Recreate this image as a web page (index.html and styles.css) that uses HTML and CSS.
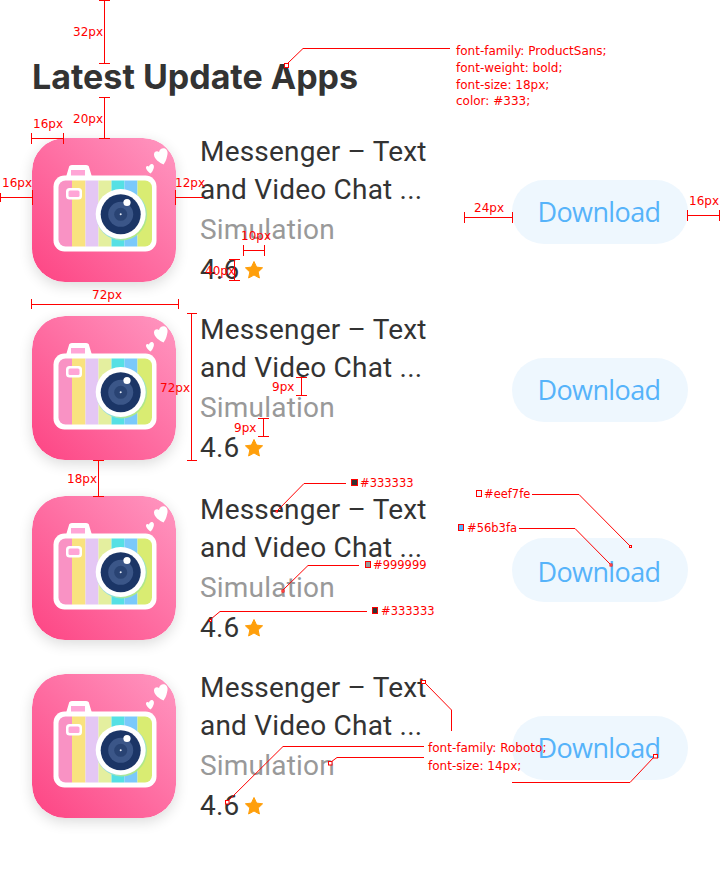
FILE: index.html
```html
<!DOCTYPE html>
<html>
<head>
    <title>Latest Update Apps</title>
    <link rel="stylesheet" href="styles.css">
</head>
<body>
    <svg class="defs" width="0" height="0">
        <defs>
            <linearGradient id="iconBg" x1="0" y1="1" x2="1" y2="0">
                <stop offset="0" stop-color="#fd4483"/>
                <stop offset="1" stop-color="#ff97c1"/>
            </linearGradient>
            <linearGradient id="lensRim" x1="0" y1="0" x2="1" y2="1">
                <stop offset="0" stop-color="#e0b8f0"/>
                <stop offset="0.6" stop-color="#8fe0d8"/>
                <stop offset="1" stop-color="#c9ee4c"/>
            </linearGradient>
            <clipPath id="bodyClip">
                <rect x="26.500" y="42.500" width="93.500" height="66" rx="7"/>
            </clipPath>
            <symbol id="appIcon" viewBox="0 0 144 144">
                <rect width="144" height="144" rx="33" fill="url(#iconBg)"/>
                <!-- hearts -->
                <path d="M131.500 26.500C128 25 122 21 122 16.500C122 13.500 125 12.500 127 14C127.500 11 130.500 9.500 133 10.500C136 12 136 15.500 135 18.500C134.500 21.500 133 24.500 131.500 26.500Z" fill="#fff"/>
                <path d="M118.500 35.500C117 34.500 114 32 114 29.500C114 28 115.500 27.500 117 28.500C117.500 26.500 119.500 25.500 121 26.500C122.500 27.500 122 30 121 32C120.500 33.500 119.500 34.500 118.500 35.500Z" fill="#fff"/>
                <!-- viewfinder -->
                <path d="M34 39l3-10c0-1 1-2 3-2h14c2 0 3 1 3 2l3 10z" fill="#fff"/>
                <rect x="39" y="32" width="14" height="6" fill="#ffa5d6"/>
                <!-- body -->
                <rect x="21.500" y="37.500" width="103" height="76" rx="11" fill="#fff"/>
                <g clip-path="url(#bodyClip)">
                    <rect x="26" y="42" width="14" height="68" fill="#f992c4"/>
                    <rect x="40" y="42" width="13.500" height="68" fill="#f9e27f"/>
                    <rect x="53.500" y="42" width="13" height="68" fill="#e4c7f4"/>
                    <rect x="66.500" y="42" width="13" height="68" fill="#e4ef9f"/>
                    <rect x="79.500" y="42" width="13" height="68" fill="#55e0e4"/>
                    <rect x="92.500" y="42" width="13" height="68" fill="#7ac9fb"/>
                    <rect x="105.500" y="42" width="15" height="68" fill="#d9ec72"/>
                </g>
                <!-- flash -->
                <rect x="34" y="50" width="16" height="11.500" rx="3.500" fill="#fff"/>
                <rect x="36.500" y="52.500" width="11" height="6.500" rx="1.500" fill="#ffa5d6"/>
                <!-- lens -->
                <circle cx="89.500" cy="77" r="25.500" fill="url(#lensRim)"/>
                <circle cx="88.700" cy="76" r="25" fill="#fff"/>
                <circle cx="88.700" cy="76.300" r="20" fill="#1b3566"/>
                <circle cx="88.700" cy="76.300" r="12.500" fill="#3b5688"/>
                <circle cx="88.700" cy="76.300" r="6.500" fill="#294373"/>
                <circle cx="88.700" cy="76.300" r="1" fill="#e8eef8"/>
                <circle cx="95" cy="64.500" r="3.600" fill="#fff"/>
            </symbol>
            <symbol id="star" viewBox="0 0 20 20">
                <path d="M10 1.500l2.600 5.600 6 .7-4.400 4.200 1.200 6-5.400-3-5.400 3 1.200-6L1.400 7.800l6-.7z" fill="#ff9f0b" stroke="#ff9f0b" stroke-width="1" stroke-linejoin="round"/>
            </symbol>
        </defs>
    </svg>

    <h1 class="page-title">Latest Update Apps</h1>

    <div class="app-list">
        <div class="app-row">
            <svg class="app-icon"><use href="#appIcon"/></svg>
            <div class="app-info">
                <div class="app-name">Messenger – Text and Video Chat ...</div>
                <div class="app-category">Simulation</div>
                <div class="app-rating">4.6 <svg class="star"><use href="#star"/></svg></div>
            </div>
            <a class="download-btn">Download</a>
        </div>
        <div class="app-row">
            <svg class="app-icon"><use href="#appIcon"/></svg>
            <div class="app-info">
                <div class="app-name">Messenger – Text and Video Chat ...</div>
                <div class="app-category">Simulation</div>
                <div class="app-rating">4.6 <svg class="star"><use href="#star"/></svg></div>
            </div>
            <a class="download-btn">Download</a>
        </div>
        <div class="app-row">
            <svg class="app-icon"><use href="#appIcon"/></svg>
            <div class="app-info">
                <div class="app-name">Messenger – Text and Video Chat ...</div>
                <div class="app-category">Simulation</div>
                <div class="app-rating">4.6 <svg class="star"><use href="#star"/></svg></div>
            </div>
            <a class="download-btn">Download</a>
        </div>
        <div class="app-row">
            <svg class="app-icon"><use href="#appIcon"/></svg>
            <div class="app-info">
                <div class="app-name">Messenger – Text and Video Chat ...</div>
                <div class="app-category">Simulation</div>
                <div class="app-rating">4.6 <svg class="star"><use href="#star"/></svg></div>
            </div>
            <a class="download-btn">Download</a>
        </div>
    </div>

    <!-- red measuring marks laid over the design -->
    <svg class="marks" viewBox="0 0 720 882">
        <g class="dim">
            <path d="M104.500 0V63M99 .5H110M99 63.500H110"/>
            <path d="M104.500 97V138M99 97.500H110M99 138.500H110"/>
            <path d="M31.500 133V144M31.500 138.500H63.500M63.500 133V144"/>
            <path d="M0 197.500H32.500M32.500 190V205M.5 193V202"/>
            <path d="M175.500 197.500H204M175.500 190V205"/>
            <path d="M31.500 299V309M31.500 304H178.500M178.500 299V309"/>
            <path d="M191.500 313.500V460M187 313.500H197M187 460.500H197"/>
            <path d="M301.500 377V395M296 377.500H307M296 395.500H307"/>
            <path d="M263.500 418V436M258 418.500H269M258 436.500H269"/>
            <path d="M98.500 460V497M93 460.500H104M93 496.500H104"/>
            <path d="M243.500 245V256M243.500 250.500H264.500M264.500 245V256"/>
            <path d="M234.500 259V280M229 259.500H240M229 280.500H240"/>
            <path d="M464.500 212V223M464.500 217.500H512.500M512.500 212V223"/>
            <path d="M687.500 210V221M687.500 215.500H719.500M719.500 210V221"/>
            <path d="M303 48.500H450"/>
            <path d="M304 483.500H346"/>
            <path d="M308 565.500H359"/>
            <path d="M220 611.500H367"/>
            <path d="M532 494.500H579"/>
            <path d="M519 528.500H575"/>
            <path d="M451.500 710V731"/>
            <path d="M283 746.500H424"/>
            <path d="M337 757.500H424"/>
            <path d="M630 782.500H512"/>
        </g>
        <g class="leader">
            <path d="M288 63L303 48.500"/>
            <path d="M277 511L304 483.500"/>
            <path d="M283 590L308 565.500"/>
            <path d="M211 619L220 611.500"/>
            <path d="M579 494.500L630 546"/>
            <path d="M575 528.500L611 565"/>
            <path d="M425 683L451.500 710"/>
            <path d="M228 801L283 746.500"/>
            <path d="M331 762L337 757.500"/>
            <path d="M654 757L630 782.500"/>
        </g>
        <g class="pin">
            <rect x="284.500" y="63.500" width="4" height="4"/>
            <rect x="629.500" y="545.500" width="2" height="2"/>
            <rect x="610" y="564" width="2" height="2"/>
            <rect x="276" y="510.500" width="1.500" height="1.500"/>
            <rect x="282" y="590" width="2" height="2"/>
            <rect x="209.500" y="619.500" width="2" height="2"/>
            <rect x="421.500" y="680.500" width="4" height="3"/>
            <rect x="225.500" y="800.500" width="3.500" height="3.500"/>
            <rect x="328.500" y="761.500" width="3.500" height="3.500"/>
            <rect x="653.500" y="754.500" width="4" height="3.500"/>
        </g>
        <rect class="swatch" x="351.500" y="479.500" width="6" height="6" fill="#333333"/>
        <rect class="swatch" x="365.500" y="561.500" width="5" height="6" fill="#999999"/>
        <rect class="swatch" x="372.500" y="607.500" width="5" height="6" fill="#333333"/>
        <rect class="swatch" x="476.500" y="490.500" width="5" height="6" fill="#eef7fe"/>
        <rect class="swatch" x="458.500" y="524.500" width="5" height="6" fill="#56b3fa"/>
        <g class="mark-text">
            <text x="73" y="36">32px</text>
            <text x="73" y="123">20px</text>
            <text x="33" y="128">16px</text>
            <text x="2" y="187">16px</text>
            <text x="175" y="187">12px</text>
            <text x="92" y="299">72px</text>
            <text x="160" y="392">72px</text>
            <text x="272" y="391">9px</text>
            <text x="234" y="432">9px</text>
            <text x="67" y="483">18px</text>
            <text x="241" y="240">10px</text>
            <text x="205" y="275">40px</text>
            <text x="474" y="212">24px</text>
            <text x="689" y="205">16px</text>
            <text x="456" y="55">font-family: ProductSans;</text>
            <text x="456" y="72">font-weight: bold;</text>
            <text x="456" y="89">font-size: 18px;</text>
            <text x="456" y="105">color: #333;</text>
            <text class="hex" x="360" y="487">#333333</text>
            <text class="hex" x="373" y="569">#999999</text>
            <text class="hex" x="381" y="615">#333333</text>
            <text class="hex" x="484" y="498">#eef7fe</text>
            <text class="hex" x="467" y="532">#56b3fa</text>
            <text x="428" y="752">font-family: Roboto;</text>
            <text x="428" y="770">font-size: 14px;</text>
        </g>
    </svg>
</body>
</html>
```

FILE: styles.css
```css
body {
    margin: 0;
    height: 882px;
    overflow: hidden;
    position: relative;
    background-color: #fff;
    font-family: Roboto, Arial, sans-serif;
    color: #333;
}
.defs {
    position: absolute;
}
.page-title {
    margin: 0;
    padding: 55px 32px 0;
    height: 83px;
    font-family: Inter, Arial, sans-serif;
    font-size: 34px;
    font-weight: bold;
    line-height: 44px;
    color: #333;
}
.app-list {
    display: flex;
    flex-direction: column;
}
.app-row {
    display: flex;
    align-items: center;
    height: 148px;
    margin-bottom: 30px;
    padding: 0 32px;
}
.app-row:nth-child(2) {
    margin-bottom: 32px;
}
.app-icon {
    align-self: flex-start;
    flex: none;
    width: 144px;
    height: 144px;
    border-radius: 33px;
    box-shadow: 0 4px 14px rgba(0, 0, 0, 0.14);
}
.app-info {
    align-self: flex-start;
    width: 240px;
    margin: -5px 0 0 24px;
    font-size: 28px;
    line-height: 38px;
    letter-spacing: 0.2px;
}
.app-name {
    color: #333;
}
.app-category {
    margin-top: 2px;
    color: #999;
}
.app-rating {
    display: flex;
    align-items: center;
    gap: 5px;
    margin-top: 2px;
    color: #333;
}
.star {
    width: 20px;
    height: 20px;
}
.download-btn {
    margin-left: auto;
    width: 174px;
    height: 64px;
    padding-right: 2px;
    border-radius: 32px;
    background-color: #eef7fe;
    color: #56b3fa;
    font-family: 'Open Sans', Arial, sans-serif;
    font-size: 27px;
    letter-spacing: -0.6px;
    line-height: 63px;
    text-align: center;
}
.app-row:nth-child(3) .download-btn {
    line-height: 67px;
}
.marks {
    position: absolute;
    top: 0;
    left: 0;
    width: 720px;
    height: 882px;
}
.dim path,
.leader path {
    fill: none;
    stroke: #f00;
    stroke-width: 1;
}
.dim path {
    shape-rendering: crispEdges;
}
.pin rect {
    fill: #fff;
    stroke: #f00;
    stroke-width: 1;
}
.swatch {
    stroke: #f00;
    stroke-width: 1;
}
.mark-text text {
    font-family: 'DejaVu Sans', Verdana, sans-serif;
    font-size: 12px;
    fill: #f00;
}
.mark-text .hex {
    font-size: 11.5px;
}
```
